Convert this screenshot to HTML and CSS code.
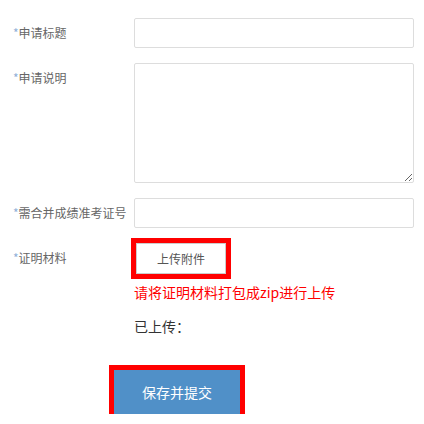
FILE: index.html
```html
<!DOCTYPE html>
<html lang="zh-CN">
<head>
    <meta charset="UTF-8">
    <meta name="viewport" content="width=device-width, initial-scale=1.0">
    <title>申请</title>
    <link rel="stylesheet" href="styles.css">
</head>
<body>
    <form class="apply-form">
        <div class="row">
            <label class="label"><span class="star">*</span>申请标题</label>
            <input class="field" type="text">
        </div>
        <div class="row">
            <label class="label"><span class="star">*</span>申请说明</label>
            <textarea class="field area"></textarea>
        </div>
        <div class="row">
            <label class="label"><span class="star">*</span>需合并成绩准考证号</label>
            <input class="field" type="text">
        </div>
        <div class="row">
            <label class="label"><span class="star">*</span>证明材料</label>
            <div class="upload">
                <button type="button" class="upload-btn">上传附件</button>
                <p class="hint">请将证明材料打包成zip进行上传</p>
                <p class="uploaded">已上传：</p>
            </div>
        </div>
        <div class="actions">
            <button type="button" class="submit-btn">保存并提交</button>
        </div>
    </form>
</body>
</html>
```

FILE: styles.css
```css
body {
    margin: 0;
    font-family: "Noto Sans CJK SC", "Liberation Sans", sans-serif;
    background-color: #fff;
}
.apply-form {
    padding: 18px 10px 0 13px;
}
.row {
    display: flex;
    margin-bottom: 15px;
}
.label {
    width: 121px;
    flex-shrink: 0;
    font-size: 12px;
    line-height: 30px;
    color: #666;
}
.star {
    color: #8fb0d8;
}
.field {
    width: 280px;
    height: 30px;
    box-sizing: border-box;
    border: 1px solid #ddd;
    border-radius: 2px;
    padding: 4px 6px;
    margin: 0;
    font-family: inherit;
}
.area {
    height: 120px;
}
.upload {
    display: flex;
    flex-direction: column;
    align-items: flex-start;
}
.upload-btn {
    width: 90px;
    height: 31px;
    margin-left: 2px;
    background-color: #fff;
    border: 1px solid #ccc;
    color: #555;
    font-family: inherit;
    font-size: 12px;
    outline: 5px solid #ff0000;
    cursor: pointer;
}
.hint {
    margin: 8px 0 0;
    font-size: 14px;
    line-height: 20px;
    color: #ff0000;
}
.uploaded {
    margin: 14px 0 0;
    font-size: 14px;
    line-height: 20px;
    color: #333;
}
.actions {
    padding-left: 101px;
    margin-top: 34px;
}
.submit-btn {
    width: 126px;
    height: 44px;
    background-color: #5090c8;
    border: none;
    color: #fff;
    font-family: inherit;
    font-size: 14px;
    outline: 5px solid #ff0000;
    cursor: pointer;
}
```
